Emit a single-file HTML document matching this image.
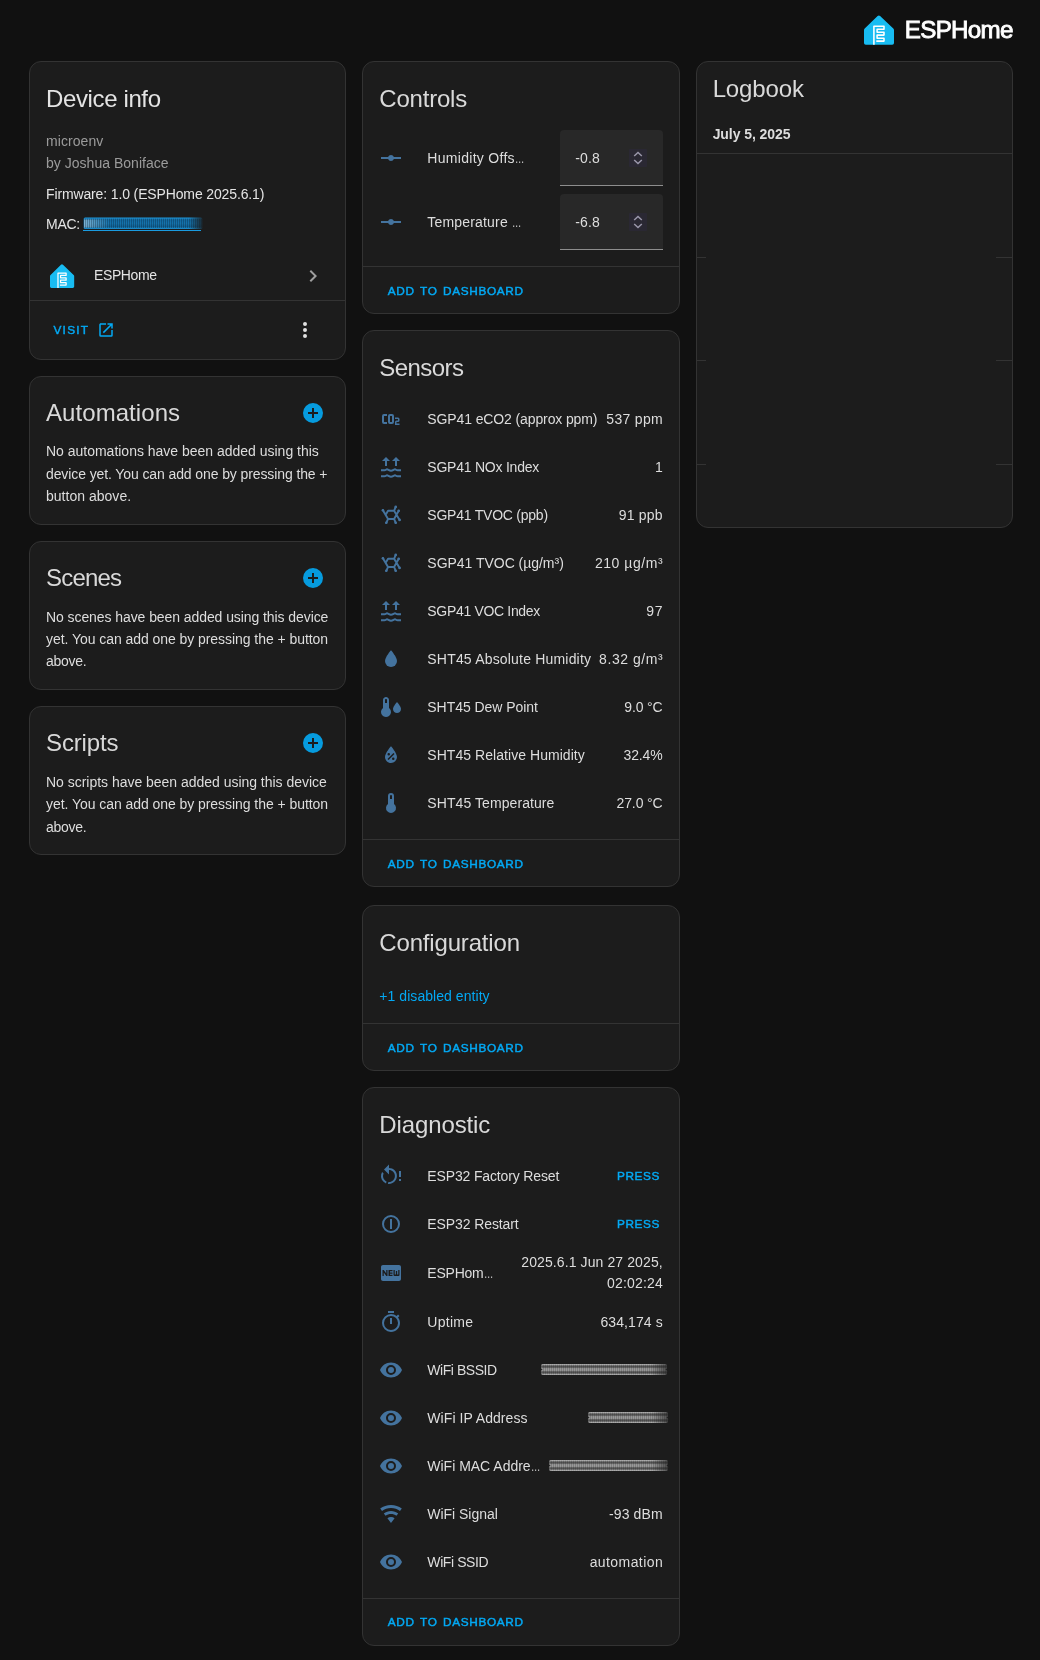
<!DOCTYPE html>
<html lang="en"><head><meta charset="utf-8"><title>ESPHome device</title>
<style>
html,body{margin:0;padding:0}
body{width:1040px;height:1660px;background:#111;position:relative;overflow:hidden;font-family:"Liberation Sans",sans-serif;color:#e1e1e1;-webkit-font-smoothing:antialiased}
.wrap{position:absolute;left:0;top:0;width:1040px;height:1660px;will-change:transform}
.card{position:absolute;box-sizing:border-box;background:#1c1c1c;border:1px solid #333;border-radius:12px}
.hl{position:absolute;height:1px;background:#333}
.ic{position:absolute;display:block;overflow:visible}
.t{position:absolute;white-space:nowrap;font-size:14px;line-height:20px;letter-spacing:-0.2px;color:#dddddd}
.t.h{font-size:24px;line-height:32px;margin-top:-6px;letter-spacing:-0.9px;color:#d9d9d9}
.t.sec{color:#9b9b9b}
.el{display:inline-block;width:9.4px;letter-spacing:0;transform:scaleX(.67);transform-origin:0 50%}
.t.b{font-weight:bold;letter-spacing:-0.35px}
.t.link{color:#03a9f4}
.t.btn{color:#03a9f4;font-size:11.8px;margin-top:-0.3px;letter-spacing:1.05px;word-spacing:1.5px;-webkit-text-stroke:0.45px #03a9f4}
.t.logo{font-size:24.2px;line-height:32px;margin-top:-6px;color:#fff;-webkit-text-stroke:0.85px #fff}
.field{position:absolute;width:103.330px;height:55px;background:#282828;border-bottom:1px solid #8e8e8e;border-radius:4px 4px 0 0}
.spin{position:absolute;width:18px;height:18px;background:#2a2833;border-radius:1px}
</style></head>
<body>
<div class="wrap">
<svg class="ic" style="left:864.00px;top:14.50px;width:30px;height:30px" viewBox="0 0 30 30"><path d="M0,15.300Q0,14.300 0.700,13.600L13.600,1Q14.850,-0.200 16.100,1L29.300,13.600Q30,14.300 30,15.300V27.900Q30,29.700 28.200,29.700H1.800Q0,29.700 0,27.900Z" fill="#18bcf2"/><path d="M9.900,29.700V11.300H20V14.150H13.100V17.200H20V20.100H13.100V23.200H20V26.100H12.300" fill="none" stroke="#fff" stroke-width="1.550" stroke-linejoin="round"/></svg>
<span id="t0" class="t logo" style="left:904.80px;top:20.40px;letter-spacing:-0.704px;">ESPHome</span>
<div class="card" style="left:29.00px;top:61px;width:317.33px;height:299px"></div>
<span id="t1" class="t h" style="left:46.00px;top:89.00px;color:#e4e4e4;letter-spacing:-0.373px;">Device info</span>
<span id="t2" class="t sec" style="left:46.00px;top:131.00px;letter-spacing:0.072px;">microenv</span>
<span id="t3" class="t sec" style="left:46.00px;top:153.00px;letter-spacing:0.023px;">by Joshua Boniface</span>
<span id="t4" class="t " style="left:46.00px;top:184.00px;color:#e4e4e4;letter-spacing:-0.133px;">Firmware: 1.0 (ESPHome 2025.6.1)</span>
<span id="t5" class="t " style="left:46.00px;top:213.70px;color:#e4e4e4;letter-spacing:-0.267px;">MAC:</span>
<svg class="ic" style="left:83px;top:216px;width:120px;height:16px" viewBox="0 0 120 16"><defs><linearGradient id="mg" x1="0" y1="0" x2="0" y2="1"><stop offset="0" stop-color="#1d97dc"/><stop offset=".2" stop-color="#136ba2"/><stop offset=".5" stop-color="#1574ae"/><stop offset=".8" stop-color="#116396"/><stop offset="1" stop-color="#1b8fd0"/></linearGradient><linearGradient id="mf" x1="0" y1="0" x2="1" y2="0"><stop offset="0" stop-color="#1c1c1c" stop-opacity="0"/><stop offset="1" stop-color="#1c1c1c" stop-opacity=".85"/></linearGradient><linearGradient id="mw" x1="0" y1="0" x2="1" y2="0"><stop offset="0" stop-color="#cfe6f5" stop-opacity=".55"/><stop offset="1" stop-color="#cfe6f5" stop-opacity="0"/></linearGradient><pattern id="mh" width="2" height="4" patternUnits="userSpaceOnUse"><rect width="1" height="4" fill="#071c2b" opacity=".32"/></pattern></defs><rect x=".6" y="1.600" width="118.800" height="11.300" rx="1.500" fill="url(#mg)"/><rect x="1" y="3.500" width="26" height="8" fill="url(#mw)"/><rect x=".6" y="2.600" width="118.800" height="9.300" fill="url(#mh)"/><rect x="106" y="1" width="14" height="12.500" fill="url(#mf)"/><rect x="0" y="14" width="118" height="1" fill="#1a9be0"/></svg>
<svg class="ic" style="left:49.90px;top:263.70px;width:24.2px;height:24.2px" viewBox="0 0 30 30"><path d="M0,15.300Q0,14.300 0.700,13.600L13.600,1Q14.850,-0.200 16.100,1L29.300,13.600Q30,14.300 30,15.300V27.900Q30,29.700 28.200,29.700H1.800Q0,29.700 0,27.900Z" fill="#18bcf2"/><path d="M9.900,29.700V11.300H20V14.150H13.100V17.200H20V20.100H13.100V23.200H20V26.100H12.300" fill="none" stroke="#fff" stroke-width="1.550" stroke-linejoin="round"/></svg>
<span id="t6" class="t " style="left:94.00px;top:265.00px;color:#e4e4e4;letter-spacing:-0.393px;">ESPHome</span>
<svg class="ic" style="left:301.00px;top:263.50px;width:24px;height:24px;color:#9e9e9e" viewBox="0 0 24 24" fill="currentColor"><path d="M8.590,16.580L13.170,12L8.590,7.410L10,6L16,12L10,18L8.590,16.580Z"/></svg>
<div class="hl" style="left:30.00px;top:300px;width:315.33px"></div>
<span id="t7" class="t btn" style="left:53.50px;top:320.00px;letter-spacing:1.250px;">VISIT</span>
<svg class="ic" style="left:96.70px;top:321.00px;width:18px;height:18px;color:#03a9f4" viewBox="0 0 24 24" fill="currentColor"><path d="M14,3V5H17.590L7.760,14.830L9.170,16.240L19,6.410V10H21V3M19,19H5V5H12V3H5C3.890,3 3,3.900 3,5V19A2,2 0 0,0 5,21H19A2,2 0 0,0 21,19V12H19V19Z"/></svg>
<svg class="ic" style="left:293.00px;top:318.00px;width:24px;height:24px;color:#e1e1e1" viewBox="0 0 24 24" fill="currentColor"><path d="M12,16A2,2 0 0,1 14,18A2,2 0 0,1 12,20A2,2 0 0,1 10,18A2,2 0 0,1 12,16M12,10A2,2 0 0,1 14,12A2,2 0 0,1 12,14A2,2 0 0,1 10,12A2,2 0 0,1 12,10M12,4A2,2 0 0,1 14,6A2,2 0 0,1 12,8A2,2 0 0,1 10,6A2,2 0 0,1 12,4Z"/></svg>
<div class="card" style="left:29.00px;top:376px;width:317.33px;height:149px"></div>
<span id="t8" class="t h" style="left:46.00px;top:403.00px;letter-spacing:0.069px;">Automations</span>
<svg class="ic" style="left:301.00px;top:401.00px;width:24px;height:24px;color:#069bde" viewBox="0 0 24 24" fill="currentColor"><path d="M17,13H13V17H11V13H7V11H11V7H13V11H17M12,2A10,10 0 0,0 2,12A10,10 0 0,0 12,22A10,10 0 0,0 22,12A10,10 0 0,0 12,2Z"/></svg>
<span id="t9" class="t " style="left:46.00px;top:441.00px;letter-spacing:-0.010px;">No automations have been added using this</span>
<span id="t10" class="t " style="left:46.00px;top:464.00px;letter-spacing:-0.103px;">device yet. You can add one by pressing the +</span>
<span id="t11" class="t " style="left:46.00px;top:486.00px;letter-spacing:0.020px;">button above.</span>
<div class="card" style="left:29.00px;top:541px;width:317.33px;height:149px"></div>
<span id="t12" class="t h" style="left:46.00px;top:568.20px;letter-spacing:-0.793px;">Scenes</span>
<svg class="ic" style="left:301.00px;top:566.20px;width:24px;height:24px;color:#069bde" viewBox="0 0 24 24" fill="currentColor"><path d="M17,13H13V17H11V13H7V11H11V7H13V11H17M12,2A10,10 0 0,0 2,12A10,10 0 0,0 12,22A10,10 0 0,0 22,12A10,10 0 0,0 12,2Z"/></svg>
<span id="t13" class="t " style="left:46.00px;top:607.00px;letter-spacing:-0.077px;">No scenes have been added using this device</span>
<span id="t14" class="t " style="left:46.00px;top:629.00px;letter-spacing:-0.055px;">yet. You can add one by pressing the + button</span>
<span id="t15" class="t " style="left:46.00px;top:651.00px;letter-spacing:-0.289px;">above.</span>
<div class="card" style="left:29.00px;top:706px;width:317.33px;height:149px"></div>
<span id="t16" class="t h" style="left:46.00px;top:733.40px;letter-spacing:-0.127px;">Scripts</span>
<svg class="ic" style="left:301.00px;top:731.40px;width:24px;height:24px;color:#069bde" viewBox="0 0 24 24" fill="currentColor"><path d="M17,13H13V17H11V13H7V11H11V7H13V11H17M12,2A10,10 0 0,0 2,12A10,10 0 0,0 12,22A10,10 0 0,0 22,12A10,10 0 0,0 12,2Z"/></svg>
<span id="t17" class="t " style="left:46.00px;top:772.00px;letter-spacing:-0.022px;">No scripts have been added using this device</span>
<span id="t18" class="t " style="left:46.00px;top:794.00px;letter-spacing:-0.055px;">yet. You can add one by pressing the + button</span>
<span id="t19" class="t " style="left:46.00px;top:817.00px;letter-spacing:-0.289px;">above.</span>
<div class="card" style="left:362.33px;top:61px;width:317.33px;height:253px"></div>
<span id="t20" class="t h" style="left:379.33px;top:89.00px;letter-spacing:-0.215px;">Controls</span>
<svg class="ic" style="left:379.33px;top:146.00px;width:24px;height:24px;color:#44739e" viewBox="0 0 24 24" fill="currentColor"><path d="M2,11H9.17C9.58,9.83 10.69,9 12,9C13.31,9 14.42,9.83 14.83,11H22V13H14.83C14.42,14.17 13.31,15 12,15C10.69,15 9.58,14.17 9.17,13H2V11Z"/></svg>
<span id="t21" class="t " style="left:427.33px;top:148.00px;letter-spacing:0.293px;">Humidity Offs<span class="el">…</span></span>
<div class="field" style="left:559.670px;top:130px"></div>
<span id="t22" class="t " style="left:575.20px;top:148.00px;letter-spacing:0.125px;">-0.8</span>
<div class="spin" style="left:629px;top:149px"><svg viewBox="0 0 18 18" width="18" height="18"><path d="M5.200,7L9,3.400L12.800,7M5.200,11L9,14.600L12.800,11" fill="none" stroke="#9a97aa" stroke-width="1.450"/></svg></div>
<svg class="ic" style="left:379.33px;top:210.00px;width:24px;height:24px;color:#44739e" viewBox="0 0 24 24" fill="currentColor"><path d="M2,11H9.17C9.58,9.83 10.69,9 12,9C13.31,9 14.42,9.83 14.83,11H22V13H14.83C14.42,14.17 13.31,15 12,15C10.69,15 9.58,14.17 9.17,13H2V11Z"/></svg>
<span id="t23" class="t " style="left:427.33px;top:212.00px;letter-spacing:0.175px;">Temperature <span class="el">…</span></span>
<div class="field" style="left:559.670px;top:194px"></div>
<span id="t24" class="t " style="left:575.20px;top:212.00px;letter-spacing:0.125px;">-6.8</span>
<div class="spin" style="left:629px;top:213px"><svg viewBox="0 0 18 18" width="18" height="18"><path d="M5.200,7L9,3.400L12.800,7M5.200,11L9,14.600L12.800,11" fill="none" stroke="#9a97aa" stroke-width="1.450"/></svg></div>
<div class="hl" style="left:363.33px;top:266px;width:315.33px"></div>
<span id="t25" class="t btn" style="left:387.83px;top:281.00px;letter-spacing:0.670px;">ADD TO DASHBOARD</span>
<div class="card" style="left:362.33px;top:330px;width:317.33px;height:557px"></div>
<span id="t26" class="t h" style="left:379.33px;top:358.00px;letter-spacing:-0.579px;">Sensors</span>
<svg class="ic" style="left:379.33px;top:407.00px;width:24px;height:24px;color:#44739e" viewBox="0 0 24 24" fill="currentColor"><path d="M5,7A2,2 0 0,0 3,9V15A2,2 0 0,0 5,17H8V15H5V9H8V7H5M11,7A2,2 0 0,0 9,9V15A2,2 0 0,0 11,17H13A2,2 0 0,0 15,15V9A2,2 0 0,0 13,7H11M11,9H13V15H11V9M16,10.5V12H19V13.5H17.5A1.5,1.5 0 0,0 16,15V18H20.5V16.5H17.5V15H19A1.5,1.5 0 0,0 20.5,13.5V12A1.5,1.5 0 0,0 19,10.5H16Z"/></svg>
<span id="t27" class="t " style="left:427.33px;top:409.00px;letter-spacing:-0.117px;">SGP41 eCO2 (approx ppm)</span>
<span id="t28" class="t " style="right:377.03px;top:409.00px;letter-spacing:0.313px;">537 ppm</span>
<svg class="ic" style="left:379.33px;top:455.00px;width:24px;height:24px;color:#44739e" viewBox="0 0 24 24" fill="currentColor"><path d="M7,2L11,6H8V11H6V6H3ZM17,2L21,6H18V11H16V6H13Z"/><g fill="none" stroke="currentColor" stroke-width="2"><path d="M2,15.300H5.500C6.700,15.300 7.200,14.300 8,14.300C9,14.300 10.200,15.700 12,15.700C13.800,15.700 15,14.300 16,14.300C16.800,14.300 17.300,15.300 18.500,15.300H22"/><path d="M2,21.300H5.500C6.700,21.300 7.200,20.300 8,20.300C9,20.300 10.200,21.700 12,21.700C13.800,21.700 15,20.300 16,20.300C16.800,20.300 17.300,21.300 18.500,21.300H22"/></g></svg>
<span id="t29" class="t " style="left:427.33px;top:457.00px;letter-spacing:-0.229px;">SGP41 NOx Index</span>
<span id="t30" class="t " style="right:377.34px;top:457.00px;">1</span>
<svg class="ic" style="left:379.33px;top:503.00px;width:24px;height:24px;color:#44739e" viewBox="0 0 24 24" fill="currentColor"><g fill="none" stroke="currentColor" stroke-width="1.950" stroke-linecap="round" stroke-linejoin="round"><path d="M3.900,7.250L9.050,15.900H15.100L19.700,7.800M6.650,11.850L9.050,7.800H15.100L20.600,16.900M15.100,7.800L16.700,3.900M9.050,15.900L7.300,19.800M15.100,15.900L16.700,19.800"/></g><g><circle cx="3.900" cy="7.250" r="1.300"/><circle cx="19.700" cy="7.800" r="1.300"/><circle cx="20.600" cy="16.900" r="1.300"/><circle cx="16.700" cy="3.900" r="1.300"/><circle cx="7.300" cy="19.800" r="1.300"/><circle cx="16.700" cy="19.800" r="1.300"/></g></svg>
<span id="t31" class="t " style="left:427.33px;top:505.00px;letter-spacing:-0.232px;">SGP41 TVOC (ppb)</span>
<span id="t32" class="t " style="right:377.11px;top:505.00px;letter-spacing:0.226px;">91 ppb</span>
<svg class="ic" style="left:379.33px;top:551.00px;width:24px;height:24px;color:#44739e" viewBox="0 0 24 24" fill="currentColor"><g fill="none" stroke="currentColor" stroke-width="1.950" stroke-linecap="round" stroke-linejoin="round"><path d="M3.900,7.250L9.050,15.900H15.100L19.700,7.800M6.650,11.850L9.050,7.800H15.100L20.600,16.900M15.100,7.800L16.700,3.900M9.050,15.900L7.300,19.800M15.100,15.900L16.700,19.800"/></g><g><circle cx="3.900" cy="7.250" r="1.300"/><circle cx="19.700" cy="7.800" r="1.300"/><circle cx="20.600" cy="16.900" r="1.300"/><circle cx="16.700" cy="3.900" r="1.300"/><circle cx="7.300" cy="19.800" r="1.300"/><circle cx="16.700" cy="19.800" r="1.300"/></g></svg>
<span id="t33" class="t " style="left:427.33px;top:553.00px;letter-spacing:-0.028px;">SGP41 TVOC (µg/m³)</span>
<span id="t34" class="t " style="right:376.79px;top:553.00px;letter-spacing:0.554px;">210 µg/m³</span>
<svg class="ic" style="left:379.33px;top:599.00px;width:24px;height:24px;color:#44739e" viewBox="0 0 24 24" fill="currentColor"><path d="M7,2L11,6H8V11H6V6H3ZM17,2L21,6H18V11H16V6H13Z"/><g fill="none" stroke="currentColor" stroke-width="2"><path d="M2,15.300H5.500C6.700,15.300 7.200,14.300 8,14.300C9,14.300 10.200,15.700 12,15.700C13.800,15.700 15,14.300 16,14.300C16.800,14.300 17.300,15.300 18.500,15.300H22"/><path d="M2,21.300H5.500C6.700,21.300 7.200,20.300 8,20.300C9,20.300 10.200,21.700 12,21.700C13.800,21.700 15,20.300 16,20.300C16.800,20.300 17.300,21.300 18.500,21.300H22"/></g></svg>
<span id="t35" class="t " style="left:427.33px;top:601.00px;letter-spacing:-0.325px;">SGP41 VOC Index</span>
<span id="t36" class="t " style="right:376.46px;top:601.00px;letter-spacing:0.882px;">97</span>
<svg class="ic" style="left:379.33px;top:647.00px;width:24px;height:24px;color:#44739e" viewBox="0 0 24 24" fill="currentColor"><path d="M12,20A6,6 0 0,1 6,14C6,10 12,3.25 12,3.25C12,3.25 18,10 18,14A6,6 0 0,1 12,20Z"/></svg>
<span id="t37" class="t " style="left:427.33px;top:649.00px;letter-spacing:0.188px;">SHT45 Absolute Humidity</span>
<span id="t38" class="t " style="right:376.79px;top:649.00px;letter-spacing:0.552px;">8.32 g/m³</span>
<svg class="ic" style="left:379.33px;top:695.00px;width:24px;height:24px;color:#44739e" viewBox="0 0 24 24" fill="currentColor"><path d="M10 13V5C10 3.34 8.66 2 7 2S4 3.34 4 5V13C1.790 14.66 1.340 17.790 3 20S7.790 22.660 10 21 12.660 16.210 11 14C10.720 13.620 10.380 13.280 10 13M7 4C7.550 4 8 4.450 8 5V8H6V5C6 4.450 6.450 4 7 4M18 7C18 7 14 11.340 14 14.070C14 19.310 22 19.310 22 14.070C22 11.340 18 7 18 7Z"/></svg>
<span id="t39" class="t " style="left:427.33px;top:697.00px;letter-spacing:-0.044px;">SHT45 Dew Point</span>
<span id="t40" class="t " style="right:377.48px;top:697.00px;letter-spacing:-0.140px;">9.0 °C</span>
<svg class="ic" style="left:379.33px;top:743.00px;width:24px;height:24px;color:#44739e" viewBox="0 0 24 24" fill="currentColor"><path d="M12,3.25C12,3.25 6,10 6,14C6,17.32 8.69,20 12,20A6,6 0 0,0 18,14C18,10 12,3.25 12,3.25M14.470,9.970L15.530,11.030L9.530,17.030L8.470,15.970M9.750,10A1.250,1.250 0 0,1 11,11.250A1.250,1.250 0 0,1 9.750,12.500A1.250,1.250 0 0,1 8.500,11.250A1.250,1.250 0 0,1 9.750,10M14.250,14.500A1.250,1.250 0 0,1 15.500,15.750A1.250,1.250 0 0,1 14.250,17A1.250,1.250 0 0,1 13,15.750A1.250,1.250 0 0,1 14.250,14.500Z"/></svg>
<span id="t41" class="t " style="left:427.33px;top:745.00px;letter-spacing:0.049px;">SHT45 Relative Humidity</span>
<span id="t42" class="t " style="right:377.50px;top:745.00px;letter-spacing:-0.161px;">32.4%</span>
<svg class="ic" style="left:379.33px;top:791.00px;width:24px;height:24px;color:#44739e" viewBox="0 0 24 24" fill="currentColor"><path d="M15,13V5A3,3 0 0,0 9,5V13A5,5 0 1,0 15,13M12,4A1,1 0 0,1 13,5V8H11V5A1,1 0 0,1 12,4Z"/></svg>
<span id="t43" class="t " style="left:427.33px;top:793.00px;letter-spacing:0.079px;">SHT45 Temperature</span>
<span id="t44" class="t " style="right:377.46px;top:793.00px;letter-spacing:-0.117px;">27.0 °C</span>
<div class="hl" style="left:363.33px;top:839px;width:315.33px"></div>
<span id="t45" class="t btn" style="left:387.83px;top:854.00px;letter-spacing:0.670px;">ADD TO DASHBOARD</span>
<div class="card" style="left:362.33px;top:905px;width:317.33px;height:166px"></div>
<span id="t46" class="t h" style="left:379.33px;top:933.00px;letter-spacing:-0.175px;">Configuration</span>
<span id="t47" class="t link" style="left:379.33px;top:986.00px;letter-spacing:0.054px;">+1 disabled entity</span>
<div class="hl" style="left:363.33px;top:1023px;width:315.33px"></div>
<span id="t48" class="t btn" style="left:387.83px;top:1038.00px;letter-spacing:0.670px;">ADD TO DASHBOARD</span>
<div class="card" style="left:362.33px;top:1087px;width:317.33px;height:559px"></div>
<span id="t49" class="t h" style="left:379.33px;top:1115.00px;letter-spacing:-0.121px;">Diagnostic</span>
<svg class="ic" style="left:0;top:0;width:0;height:0"><defs><linearGradient id="sg" x1="0" y1="0" x2="0" y2="1"><stop offset="0" stop-color="#c4c4c4"/><stop offset=".3" stop-color="#707070"/><stop offset=".5" stop-color="#505050"/><stop offset=".7" stop-color="#707070"/><stop offset="1" stop-color="#c4c4c4"/></linearGradient><linearGradient id="sf" x1="0" y1="0" x2="1" y2="0"><stop offset="0" stop-color="#1c1c1c" stop-opacity="0"/><stop offset="1" stop-color="#1c1c1c" stop-opacity=".6"/></linearGradient><pattern id="sh" width="2" height="4" patternUnits="userSpaceOnUse"><rect width="1" height="4" fill="#1c1c1c" opacity=".22"/></pattern></defs></svg>
<svg class="ic" style="left:379.33px;top:1164.00px;width:24px;height:24px;color:#44739e" viewBox="0 0 24 24" fill="currentColor"><path d="M10,4C12.100,4 14.100,4.800 15.600,6.300C18.700,9.400 18.700,14.500 15.600,17.600C13.800,19.500 11.300,20.200 8.900,19.900L9.400,17.900C11.100,18.100 12.900,17.500 14.200,16.200C16.500,13.900 16.500,10.100 14.200,7.700C13.100,6.600 11.500,6 10,6V10.600L5,5.600L10,0.600V4M4.300,17.600C1.700,15 1.300,11 3.100,7.900L4.600,9.400C3.500,11.600 3.900,14.400 5.800,16.200C6.300,16.700 6.900,17.100 7.600,17.400L7,19.400C6,19 5.100,18.400 4.300,17.600M20,13H22V7H20V13M20,17H22V15H20V17Z"/></svg>
<span id="t50" class="t " style="left:427.33px;top:1166.00px;letter-spacing:-0.148px;">ESP32 Factory Reset</span>
<span id="t51" class="t btn" style="right:380.15px;top:1166.50px;letter-spacing:0.550px;">PRESS</span>
<svg class="ic" style="left:379.33px;top:1212.00px;width:24px;height:24px;color:#44739e" viewBox="0 0 24 24" fill="currentColor"><path d="M12,3A9,9 0 0,0 3,12A9,9 0 0,0 12,21A9,9 0 0,0 21,12A9,9 0 0,0 12,3M12,19A7,7 0 0,1 5,12A7,7 0 0,1 12,5A7,7 0 0,1 19,12A7,7 0 0,1 12,19M11,7V17H13V7H11Z" fill-rule="evenodd"/></svg>
<span id="t52" class="t " style="left:427.33px;top:1214.00px;letter-spacing:-0.103px;">ESP32 Restart</span>
<span id="t53" class="t btn" style="right:380.15px;top:1214.50px;letter-spacing:0.550px;">PRESS</span>
<svg class="ic" style="left:379.33px;top:1260.50px;width:24px;height:24px;color:#44739e" viewBox="0 0 24 24" fill="currentColor"><path d="M20,4C21.110,4 22,4.890 22,6V18C22,19.110 21.110,20 20,20H4C2.890,20 2,19.110 2,18V6C2,4.890 2.890,4 4,4H20M8.500,15V9H7.250V12.500L4.750,9H3.500V15H4.750V11.500L7.300,15H8.500M13.500,10.260V9H9.500V15H13.500V13.750H11V12.640H13.500V11.380H11V10.260H13.500M20.500,14V9H19.250V13.500H18.130V10H16.880V13.500H15.750V9H14.500V14A1,1 0 0,0 15.500,15H19.500A1,1 0 0,0 20.500,14Z" fill-rule="evenodd"/></svg>
<span id="t54" class="t " style="left:427.33px;top:1262.50px;letter-spacing:-0.233px;">ESPHom<span class="el">…</span></span>
<span id="t55" class="t " style="right:377.24px;top:1252.00px;letter-spacing:0.101px;">2025.6.1 Jun 27 2025,</span>
<span id="t56" class="t " style="right:377.17px;top:1273.00px;letter-spacing:0.166px;">02:02:24</span>
<svg class="ic" style="left:379.33px;top:1310.00px;width:24px;height:24px;color:#44739e" viewBox="0 0 24 24" fill="currentColor"><path d="M12,20A7,7 0 0,1 5,13A7,7 0 0,1 12,6A7,7 0 0,1 19,13A7,7 0 0,1 12,20M19.030,7.390L20.450,5.970C20,5.460 19.550,5 19.040,4.560L17.620,6C16.070,4.740 14.120,4 12,4A9,9 0 0,0 3,13A9,9 0 0,0 12,22C17,22 21,17.970 21,13C21,10.880 20.260,8.930 19.030,7.390M11,14H13V8H11M15,1H9V3H15V1Z"/></svg>
<span id="t57" class="t " style="left:427.33px;top:1312.00px;letter-spacing:0.262px;">Uptime</span>
<span id="t58" class="t " style="right:377.25px;top:1312.00px;letter-spacing:0.095px;">634,174 s</span>
<svg class="ic" style="left:379.33px;top:1358.00px;width:24px;height:24px;color:#44739e" viewBox="0 0 24 24" fill="currentColor"><path d="M12,9A3,3 0 0,0 9,12A3,3 0 0,0 12,15A3,3 0 0,0 15,12A3,3 0 0,0 12,9M12,17A5,5 0 0,1 7,12A5,5 0 0,1 12,7A5,5 0 0,1 17,12A5,5 0 0,1 12,17M12,4.500C7,4.500 2.730,7.610 1,12C2.730,16.390 7,19.500 12,19.500C17,19.500 21.270,16.390 23,12C21.270,7.610 17,4.500 12,4.500Z"/></svg>
<span id="t59" class="t " style="left:427.33px;top:1360.00px;letter-spacing:-0.458px;">WiFi BSSID</span>
<svg class="ic" style="left:541px;top:1363px;width:126px;height:14px" viewBox="0 0 126 14"><rect x="0" y="1" width="126" height="5.400" rx="2" fill="url(#sg)"/><rect x="0" y="6.600" width="126" height="5.400" rx="2" fill="url(#sg)"/><rect x="2" y="1.500" width="124" height="10" fill="url(#sh)"/><rect x="110" y="0" width="16" height="13" fill="url(#sf)"/></svg>
<svg class="ic" style="left:379.33px;top:1406.00px;width:24px;height:24px;color:#44739e" viewBox="0 0 24 24" fill="currentColor"><path d="M12,9A3,3 0 0,0 9,12A3,3 0 0,0 12,15A3,3 0 0,0 15,12A3,3 0 0,0 12,9M12,17A5,5 0 0,1 7,12A5,5 0 0,1 12,7A5,5 0 0,1 17,12A5,5 0 0,1 12,17M12,4.500C7,4.500 2.730,7.610 1,12C2.730,16.390 7,19.500 12,19.500C17,19.500 21.270,16.390 23,12C21.270,7.610 17,4.500 12,4.500Z"/></svg>
<span id="t60" class="t " style="left:427.33px;top:1408.00px;letter-spacing:0.060px;">WiFi IP Address</span>
<svg class="ic" style="left:588px;top:1411px;width:80px;height:14px" viewBox="0 0 80 14"><rect x="0" y="1" width="80" height="5.400" rx="2" fill="url(#sg)"/><rect x="0" y="6.600" width="80" height="5.400" rx="2" fill="url(#sg)"/><rect x="2" y="1.500" width="78" height="10" fill="url(#sh)"/><rect x="64" y="0" width="16" height="13" fill="url(#sf)"/></svg>
<svg class="ic" style="left:379.33px;top:1454.00px;width:24px;height:24px;color:#44739e" viewBox="0 0 24 24" fill="currentColor"><path d="M12,9A3,3 0 0,0 9,12A3,3 0 0,0 12,15A3,3 0 0,0 15,12A3,3 0 0,0 12,9M12,17A5,5 0 0,1 7,12A5,5 0 0,1 12,7A5,5 0 0,1 17,12A5,5 0 0,1 12,17M12,4.500C7,4.500 2.730,7.610 1,12C2.730,16.390 7,19.500 12,19.500C17,19.500 21.270,16.390 23,12C21.270,7.610 17,4.500 12,4.500Z"/></svg>
<span id="t61" class="t " style="left:427.33px;top:1456.00px;letter-spacing:-0.014px;">WiFi MAC Addre<span class="el">…</span></span>
<svg class="ic" style="left:549px;top:1459px;width:119px;height:14px" viewBox="0 0 119 14"><rect x="0" y="1" width="119" height="5.400" rx="2" fill="url(#sg)"/><rect x="0" y="6.600" width="119" height="5.400" rx="2" fill="url(#sg)"/><rect x="2" y="1.500" width="117" height="10" fill="url(#sh)"/><rect x="103" y="0" width="16" height="13" fill="url(#sf)"/></svg>
<svg class="ic" style="left:379.33px;top:1502.00px;width:24px;height:24px;color:#44739e" viewBox="0 0 24 24" fill="currentColor"><path d="M12,21L15.600,16.200C14.600,15.450 13.350,15 12,15C10.650,15 9.400,15.450 8.400,16.200L12,21M12,3C7.950,3 4.210,4.340 1.200,6.600L3,9C5.500,7.120 8.620,6 12,6C15.380,6 18.500,7.120 21,9L22.800,6.600C19.790,4.340 16.050,3 12,3M12,9C9.300,9 6.810,9.890 4.800,11.400L6.600,13.800C8.100,12.670 9.970,12 12,12C14.030,12 15.900,12.670 17.400,13.800L19.200,11.400C17.190,9.890 14.700,9 12,9Z"/></svg>
<span id="t62" class="t " style="left:427.33px;top:1504.00px;letter-spacing:-0.033px;">WiFi Signal</span>
<span id="t63" class="t " style="right:377.20px;top:1504.00px;letter-spacing:0.140px;">-93 dBm</span>
<svg class="ic" style="left:379.33px;top:1550.00px;width:24px;height:24px;color:#44739e" viewBox="0 0 24 24" fill="currentColor"><path d="M12,9A3,3 0 0,0 9,12A3,3 0 0,0 12,15A3,3 0 0,0 15,12A3,3 0 0,0 12,9M12,17A5,5 0 0,1 7,12A5,5 0 0,1 12,7A5,5 0 0,1 17,12A5,5 0 0,1 12,17M12,4.500C7,4.500 2.730,7.610 1,12C2.730,16.390 7,19.500 12,19.500C17,19.500 21.270,16.390 23,12C21.270,7.610 17,4.500 12,4.500Z"/></svg>
<span id="t64" class="t " style="left:427.33px;top:1552.00px;letter-spacing:-0.412px;">WiFi SSID</span>
<span id="t65" class="t " style="right:376.92px;top:1552.00px;letter-spacing:0.420px;">automation</span>
<div class="hl" style="left:363.33px;top:1598px;width:315.33px"></div>
<span id="t66" class="t btn" style="left:387.83px;top:1612.50px;letter-spacing:0.670px;">ADD TO DASHBOARD</span>
<div class="card" style="left:695.67px;top:61px;width:317.33px;height:467px"></div>
<span id="t67" class="t h" style="left:712.67px;top:79.00px;letter-spacing:-0.144px;">Logbook</span>
<span id="t68" class="t b" style="left:712.67px;top:124.00px;letter-spacing:-0.072px;">July 5, 2025</span>
<div class="hl" style="left:696.67px;top:153px;width:315.33px"></div>
<div class="hl" style="left:696.67px;top:257px;width:9.00px"></div>
<div class="hl" style="left:996.00px;top:257px;width:16.00px"></div>
<div class="hl" style="left:696.67px;top:360px;width:9.00px"></div>
<div class="hl" style="left:996.00px;top:360px;width:16.00px"></div>
<div class="hl" style="left:696.67px;top:464px;width:9.00px"></div>
<div class="hl" style="left:996.00px;top:464px;width:16.00px"></div>
</div>
</body></html>
